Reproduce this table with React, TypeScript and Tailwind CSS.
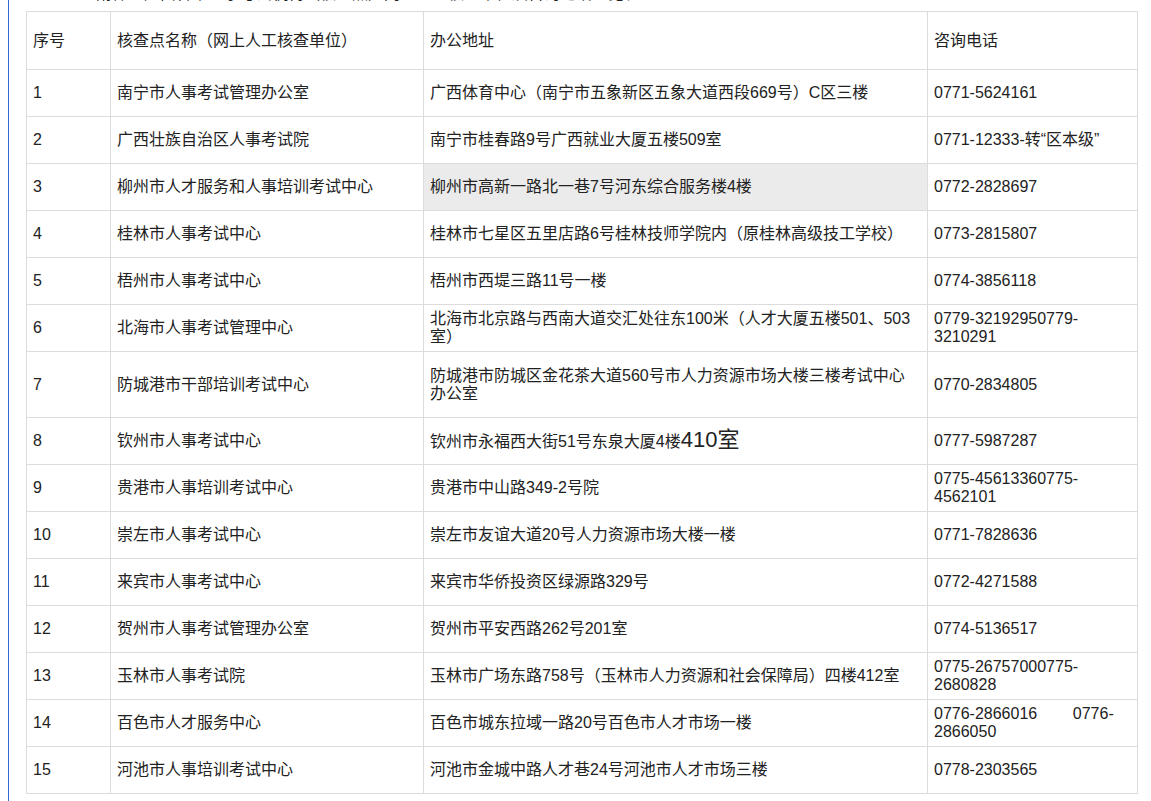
import React from "react";

const rows: [string, string, React.ReactNode, React.ReactNode][] = [
  ["1", "南宁市人事考试管理办公室", "广西体育中心（南宁市五象新区五象大道西段669号）C区三楼", "0771-5624161"],
  ["2", "广西壮族自治区人事考试院", "南宁市桂春路9号广西就业大厦五楼509室", "0771-12333-转“区本级”"],
  ["3", "柳州市人才服务和人事培训考试中心", "柳州市高新一路北一巷7号河东综合服务楼4楼", "0772-2828697"],
  ["4", "桂林市人事考试中心", "桂林市七星区五里店路6号桂林技师学院内（原桂林高级技工学校）", "0773-2815807"],
  ["5", "梧州市人事考试中心", "梧州市西堤三路11号一楼", "0774-3856118"],
  ["6", "北海市人事考试管理中心", "北海市北京路与西南大道交汇处往东100米（人才大厦五楼501、503室）", "0779-32192950779-3210291"],
  [
    "7",
    "防城港市干部培训考试中心",
    <>
      防城港市防城区金花茶大道560号市人力资源市场大楼三楼考试中心
      <br />
      办公室
    </>,
    "0770-2834805",
  ],
  [
    "8",
    "钦州市人事考试中心",
    <>
      钦州市永福西大街51号东泉大厦4楼<span className="text-[22px] leading-[18px]">410室</span>
    </>,
    "0777-5987287",
  ],
  ["9", "贵港市人事培训考试中心", "贵港市中山路349-2号院", "0775-45613360775-4562101"],
  ["10", "崇左市人事考试中心", "崇左市友谊大道20号人力资源市场大楼一楼", "0771-7828636"],
  ["11", "来宾市人事考试中心", "来宾市华侨投资区绿源路329号", "0772-4271588"],
  ["12", "贺州市人事考试管理办公室", "贺州市平安西路262号201室", "0774-5136517"],
  ["13", "玉林市人事考试院", "玉林市广场东路758号（玉林市人力资源和社会保障局）四楼412室", "0775-26757000775-2680828"],
  [
    "14",
    "百色市人才服务中心",
    "百色市城东拉域一路20号百色市人才市场一楼",
    <>0776-2866016{"\u00a0".repeat(8)}0776-2866050</>,
  ],
  ["15", "河池市人事培训考试中心", "河池市金城中路人才巷24号河池市人才市场三楼", "0778-2303565"],
];

export default function App() {
  const td = "border border-[#dcdcdc] px-[6px] align-middle";
  return (
    <div
      className="min-h-[801px] w-[1151px] bg-white text-[16px] leading-[18px] text-[#222]"
      style={{ fontFamily: '"Liberation Sans", "Noto Sans CJK SC", sans-serif' }}
    >
      <div className="ml-[8px] min-h-[801px] border-l border-[#3366d6] pl-[17px]">
        <div className="h-[11px] overflow-hidden">
          <p className="-mt-[15px] pl-[70px] text-[16px] leading-[18px]">
            附件：广西各市人事考试机构（核查点）网上人工核查单位及咨询电话一览表
          </p>
        </div>
        <table className="w-[1111px] table-fixed border-collapse">
          <colgroup>
            <col className="w-[84px]" />
            <col className="w-[313px]" />
            <col className="w-[504px]" />
            <col className="w-[210px]" />
          </colgroup>
          <tbody>
            <tr className="h-[58px]">
              <td className={td}>序号</td>
              <td className={td}>核查点名称（网上人工核查单位）</td>
              <td className={td}>办公地址</td>
              <td className={td}>咨询电话</td>
            </tr>
            {rows.map((r) => (
              <tr key={r[0]} className={r[0] === "7" ? "h-[66px]" : "h-[47px]"}>
                <td className={td}>{r[0]}</td>
                <td className={td}>{r[1]}</td>
                <td className={td + (r[0] === "3" ? " bg-[#ebebeb]" : "")}>{r[2]}</td>
                <td className={td}>{r[3]}</td>
              </tr>
            ))}
          </tbody>
        </table>
      </div>
    </div>
  );
}
